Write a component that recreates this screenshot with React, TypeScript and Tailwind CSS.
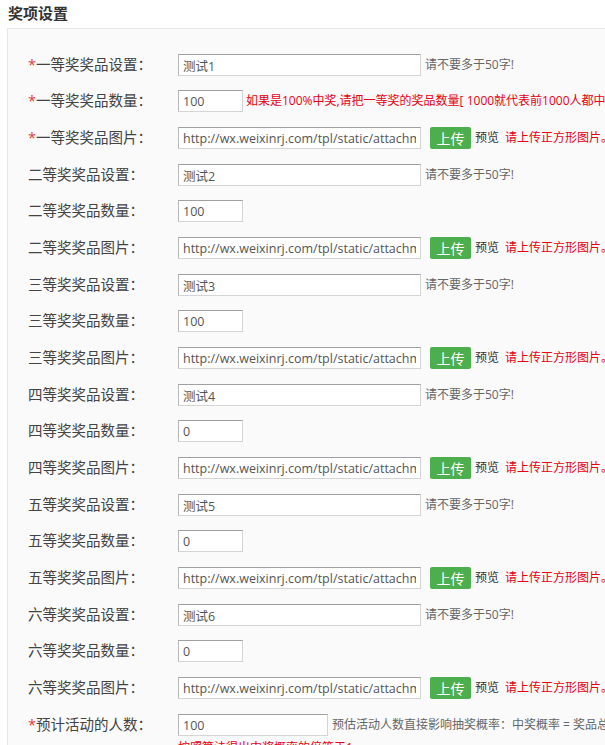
import React from "react";

const font = { fontFamily: '"Open Sans", "Noto Sans CJK SC", sans-serif' };

const ranks = ["一", "二", "三", "四", "五", "六"];
const names = ["测试1", "测试2", "测试3", "测试4", "测试5", "测试6"];
const counts = ["100", "100", "100", "0", "0", "0"];
const imgUrl = "http://wx.weixinrj.com/tpl/static/attachment/images/prize.png";

function Label({ text, required }: { text: string; required?: boolean }) {
  return (
    <div className="w-[150px] shrink-0 text-[14.5px] text-[#444]">
      {required && <span className="text-[#e4393c]">*</span>}
      {text}：
    </div>
  );
}

function Input({ value, width }: { value: string; width: string }) {
  return (
    <input
      readOnly
      value={value}
      className={`${width} h-[22px] shrink-0 border border-[#d4d4d4] border-t-[#a0a0a0] border-l-[#b8b8b8] bg-white px-[4px] text-[12.5px] text-[#555] outline-none`}
      style={font}
    />
  );
}

function Row({ children, tall }: { children: React.ReactNode; tall?: boolean }) {
  return (
    <div className={`flex items-center whitespace-nowrap pl-[20px] ${tall ? "h-[38px]" : "h-[36px]"}`}>
      {children}
    </div>
  );
}

export default function App() {
  return (
    <div className="w-full h-[745px] overflow-hidden bg-white" style={font}>
      <h2 className="pl-[8px] pt-[3px] text-[15px] font-bold text-[#333] leading-[20px]">奖项设置</h2>
      <div className="ml-[7px] mt-[5px] border-l border-t border-[#e6e6e6] bg-[#fafafa] pt-[18px]">
        {ranks.map((r, i) => {
          const req = i === 0;
          return (
            <div key={r}>
              <Row>
                <Label text={`${r}等奖奖品设置`} required={req} />
                <Input value={names[i]} width="w-[243px]" />
                <span className="ml-[4px] shrink-0 text-[12px] text-[#666]">请不要多于50字!</span>
              </Row>
              <Row>
                <Label text={`${r}等奖奖品数量`} required={req} />
                <Input value={counts[i]} width="w-[65px]" />
                {req && (
                  <span className="ml-[3px] shrink-0 text-[12px] text-[#e60012]">
                    如果是100%中奖,请把一等奖的奖品数量[ 1000就代表前1000人都中奖 ]设置为活动人数
                  </span>
                )}
              </Row>
              <Row tall>
                <Label text={`${r}等奖奖品图片`} required={req} />
                <Input value={imgUrl} width="w-[243px]" />
                <button className="ml-[9px] h-[22px] w-[41px] shrink-0 rounded-[2px] bg-[#4cae4c] text-[14px] text-white">
                  上传
                </button>
                <span className="ml-[4px] shrink-0 text-[12px] text-[#333]">预览</span>
                <span className="ml-[6px] shrink-0 text-[12px] text-[#e60012]">请上传正方形图片。</span>
              </Row>
            </div>
          );
        })}
        <Row>
          <Label text="预计活动的人数" required />
          <Input value="100" width="w-[150px]" />
          <span className="ml-[4px] shrink-0 text-[12px] text-[#666]">
            预估活动人数直接影响抽奖概率：中奖概率 = 奖品总数/(预估活动人数*每人抽奖次数)
          </span>
        </Row>
        <div className="-mt-[4px] pl-[170px] text-[12px] text-[#e60012] whitespace-nowrap">
          按照算法得出中奖概率的倍等于1
        </div>
      </div>
    </div>
  );
}
